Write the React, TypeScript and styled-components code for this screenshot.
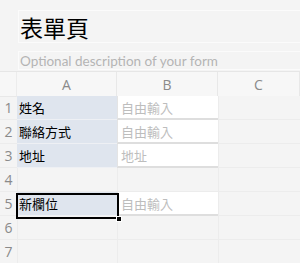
import React from 'react';
import styled, { createGlobalStyle } from 'styled-components';

const GlobalStyle = createGlobalStyle`
    html, body {
        margin: 0;
        padding: 0;
        background: #f4f4f4;
        font-family: "Open Sans", "Noto Sans CJK TC", sans-serif;
    }
`;

const Page = styled.div`
    width: 300px;
    height: 263px;
    overflow: hidden;
    padding-top: 10px;
    box-sizing: border-box;
`;

const FormHead = styled.div`
    margin-left: 18px;
    display: flex;
    flex-direction: column;
    gap: 8px;
`;

const TitleBox = styled.div`
    height: 33px;
    border: 1px solid #fbfbfb;
    border-right: none;
    box-sizing: border-box;
    padding-left: 1px;
    display: flex;
    align-items: center;
    font-family: "Noto Sans CJK TC", sans-serif;
    font-size: 23px;
    color: #000;
`;

const DescBox = styled.div`
    height: 19px;
    border: 1px solid #fbfbfb;
    border-right: none;
    box-sizing: border-box;
    padding-left: 1px;
    display: flex;
    align-items: center;
    font-family: Lato, "Open Sans", sans-serif;
    font-size: 13.5px;
    color: #b4b4b4;
    white-space: nowrap;
`;

const Sheet = styled.div`
    position: relative;
    display: grid;
    grid-template-columns: 17px 100px 101px 1fr;
    grid-auto-rows: 24px;
    border-top: 1px solid #e6e6e6;
    margin-top: 1px;
`;

const HeadCell = styled.div<{ corner?: boolean }>`
    display: flex;
    align-items: center;
    justify-content: center;
    background: #f7f7f7;
    color: #8a8a8a;
    font-size: 14px;
    border-right: 1px solid ${(props) => props.corner ? '#ececec' : '#e8e8e8'};
    border-bottom: 1px solid #e8e8e8;
    box-sizing: border-box;
    height: 25px;
`;

const RowNum = styled.div`
    display: flex;
    align-items: center;
    justify-content: center;
    color: #8a8a8a;
    font-size: 14px;
    border-bottom: 1px solid #ececec;
    box-sizing: border-box;
`;

const Cell = styled.div<{ kind: 'label' | 'input' | 'empty' }>`
    display: flex;
    align-items: center;
    padding-left: 3px;
    box-sizing: border-box;
    font-family: "Noto Sans CJK TC", sans-serif;
    font-size: 13px;
    white-space: nowrap;
    overflow: hidden;
    ${(props) => props.kind === 'label' && `
        background: #dfe5ee;
        color: #000;
        padding-left: 2px;
        border-bottom: 1px solid #eef0f4;
    `}
    ${(props) => props.kind === 'input' && `
        background: #fff;
        color: #bdbdbd;
        border-bottom: 2px solid #dedede;
        border-left: 1px solid #e4e4e4;
    `}
    ${(props) => props.kind === 'empty' && `
        background: #f4f4f4;
        border-bottom: 1px solid #ececec;
        border-left: 1px solid #ececec;
    `}
`;

const Selection = styled.div`
    position: absolute;
    left: 16px;
    top: 121px;
    width: 103px;
    height: 26px;
    border: 2px solid #000;
    box-sizing: border-box;
    pointer-events: none;
    &::after {
        content: "";
        position: absolute;
        right: -5px;
        bottom: -5px;
        width: 4px;
        height: 4px;
        background: #000;
        border: 1px solid #fff;
    }
`;

type Row = { a?: string; b?: string; input?: boolean };

const rows: Row[] = [
    { a: '姓名', b: '自由輸入', input: true },
    { a: '聯絡方式', b: '自由輸入', input: true },
    { a: '地址', b: '地址', input: true },
    {},
    { a: '新欄位', b: '自由輸入', input: true },
    {},
    {},
];

export default function App() {
    return (
        <Page>
            <GlobalStyle />
            <FormHead>
                <TitleBox>表單頁</TitleBox>
                <DescBox>Optional description of your form</DescBox>
            </FormHead>
            <Sheet>
                <HeadCell corner />
                <HeadCell>A</HeadCell>
                <HeadCell>B</HeadCell>
                <HeadCell>C</HeadCell>
                {rows.map((row, i) => (
                    <React.Fragment key={i}>
                        <RowNum>{i + 1}</RowNum>
                        <Cell kind={row.input ? 'label' : 'empty'}>{row.a}</Cell>
                        <Cell kind={row.input ? 'input' : 'empty'}>{row.b}</Cell>
                        <Cell kind="empty" />
                    </React.Fragment>
                ))}
                <Selection />
            </Sheet>
        </Page>
    );
}
